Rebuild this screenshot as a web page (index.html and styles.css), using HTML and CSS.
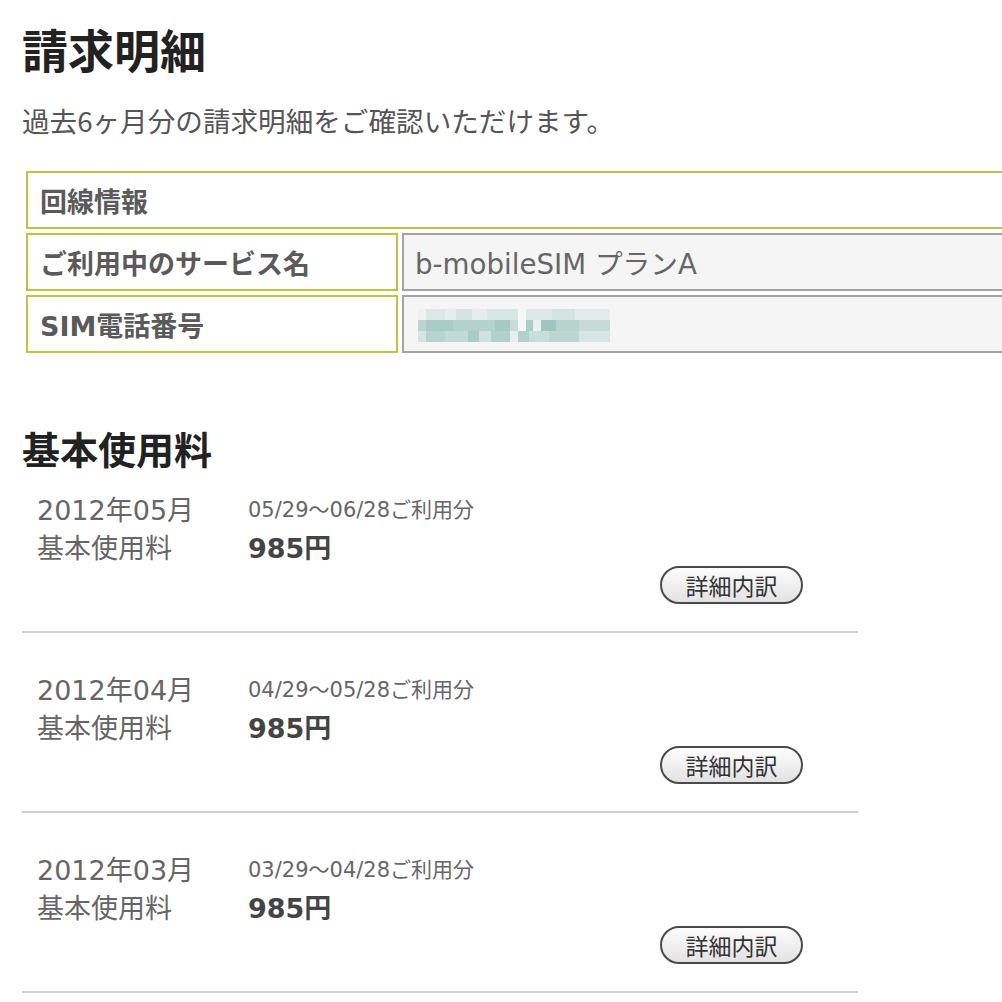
FILE: index.html
```html
<!DOCTYPE html>
<html lang="ja">
<head>
    <meta charset="UTF-8">
    <meta name="viewport" content="width=device-width, initial-scale=1.0">
    <title>請求明細</title>
    <link rel="stylesheet" href="styles.css">
</head>
<body>
    <div class="page">
        <h1>請求明細</h1>
        <p class="lead">過去6ヶ月分の請求明細をご確認いただけます。</p>

        <!-- 回線情報 -->
        <table class="line-info">
            <tr>
                <th colspan="2" class="head">回線情報</th>
            </tr>
            <tr>
                <th>ご利用中のサービス名</th>
                <td>b-mobileSIM プランA</td>
            </tr>
            <tr>
                <th>SIM電話番号</th>
                <td>
                    <span class="masked">
                        <span class="m1"></span>
                        <span class="m2"></span>
                        <span class="m3"></span>
                    </span>
                </td>
            </tr>
        </table>

        <h2>基本使用料</h2>
        <div class="bills">
            <div class="bill">
                <div class="bill-row">
                    <span class="month">2012年05月</span>
                    <span class="period">05/29〜06/28ご利用分</span>
                </div>
                <div class="bill-row">
                    <span class="month">基本使用料</span>
                    <span class="amount">985円</span>
                </div>
                <div class="bill-action"><button>詳細内訳</button></div>
            </div>
            <div class="bill">
                <div class="bill-row">
                    <span class="month">2012年04月</span>
                    <span class="period">04/29〜05/28ご利用分</span>
                </div>
                <div class="bill-row">
                    <span class="month">基本使用料</span>
                    <span class="amount">985円</span>
                </div>
                <div class="bill-action"><button>詳細内訳</button></div>
            </div>
            <div class="bill">
                <div class="bill-row">
                    <span class="month">2012年03月</span>
                    <span class="period">03/29〜04/28ご利用分</span>
                </div>
                <div class="bill-row">
                    <span class="month">基本使用料</span>
                    <span class="amount">985円</span>
                </div>
                <div class="bill-action"><button>詳細内訳</button></div>
            </div>
        </div>
    </div>
</body>
</html>
```

FILE: styles.css
```css
body {
    margin: 0;
    font-family: 'DejaVu Sans', 'Noto Sans CJK JP', sans-serif;
    background: #fff;
    color: #555;
}
.page {
    padding-left: 22px;
    overflow: hidden;
}
h1 {
    font-family: 'Noto Sans CJK JP', sans-serif;
    font-size: 46px;
    line-height: 56px;
    font-weight: bold;
    color: #222;
    margin: 20px 0 26px;
}
.lead {
    font-family: 'Noto Sans CJK JP', sans-serif;
    font-size: 27.6px;
    line-height: 36px;
    color: #555;
    margin: 0 0 29px;
}

/* 回線情報テーブル */
.line-info {
    width: 1100px;
    border-collapse: separate;
    border-spacing: 4px;
}
.line-info th,
.line-info td {
    height: 54px;
    padding: 0 10px 0 12px;
    vertical-align: middle;
    text-align: left;
    font-size: 27px;
}
.line-info th {
    width: 346px;
    border: 2px solid #bcc73f;
    background: #fff;
    color: #5a5a5a;
    font-weight: bold;
}
.line-info td {
    border: 2px solid #a3a3a3;
    background: #f5f5f5;
    color: #666;
    padding-left: 11px;
    font-size: 27.7px;
}
.masked {
    display: flex;
    flex-direction: column;
    width: 192px;
    margin-left: 3px;
    margin-top: 2px;
}
.masked span {
    display: block;
    height: 11px;
}
.masked .m1 {
    background: linear-gradient(90deg, #eef3f2 0 4%, #dbe8e6 4% 14%, #e6eeed 14% 20%, #d4e4e1 20% 28%, #e4edeb 28% 36%, #d9e7e4 36% 52%, #f6f8f8 52% 56%, #dde9e7 56% 70%, #d2e3e0 70% 82%, #e3ecea 82% 100%);
}
.masked .m2 {
    background: linear-gradient(90deg, #b9d6d1 0 4%, #a7cbc5 4% 18%, #b3d2cd 18% 40%, #a5c9c3 40% 48%, #c8ddd9 48% 52%, #f5f8f7 52% 56%, #a9ccc6 56% 60%, #e9f0ef 60% 64%, #9ec6c0 64% 72%, #b7d3ce 72% 84%, #c4dbd7 84% 100%);
}
.masked .m3 {
    background: linear-gradient(90deg, #d5e5e2 0 4%, #b7d4cf 4% 14%, #c2dad6 14% 26%, #a8ccc6 26% 32%, #d0e2df 32% 38%, #b3d1cc 38% 48%, #e8efee 48% 52%, #b2d1cc 52% 58%, #c8dedb 58% 68%, #bcd7d2 68% 84%, #d7e6e4 84% 100%);
}

/* 基本使用料 */
h2 {
    font-family: 'Noto Sans CJK JP', sans-serif;
    font-size: 38px;
    line-height: 44px;
    font-weight: bold;
    color: #222;
    margin: 69px 0 0;
}
.bills {
    width: 836px;
}
.bill {
    padding: 36px 0 27px 15px;
    border-bottom: 2px solid #d0d0d0;
}
.bill:first-child {
    padding-top: 19px;
}
.bill-row {
    display: flex;
    align-items: center;
    height: 38px;
}
.month {
    width: 211px;
    font-size: 27px;
    color: #666;
}
.period {
    font-size: 21px;
    color: #666;
}
.amount {
    font-size: 27px;
    font-weight: bold;
    color: #444;
}
.bill-action {
    display: flex;
    justify-content: flex-end;
    padding-right: 55px;
    margin-top: 1px;
}
.bill-action button {
    width: 143px;
    height: 38px;
    border: 2px solid #4a4a4a;
    border-radius: 19px;
    background: linear-gradient(#fdfdfd, #e2e2e2);
    font-family: 'Noto Sans CJK JP', sans-serif;
    font-size: 23px;
    color: #333;
    padding: 0;
    cursor: pointer;
}
```
